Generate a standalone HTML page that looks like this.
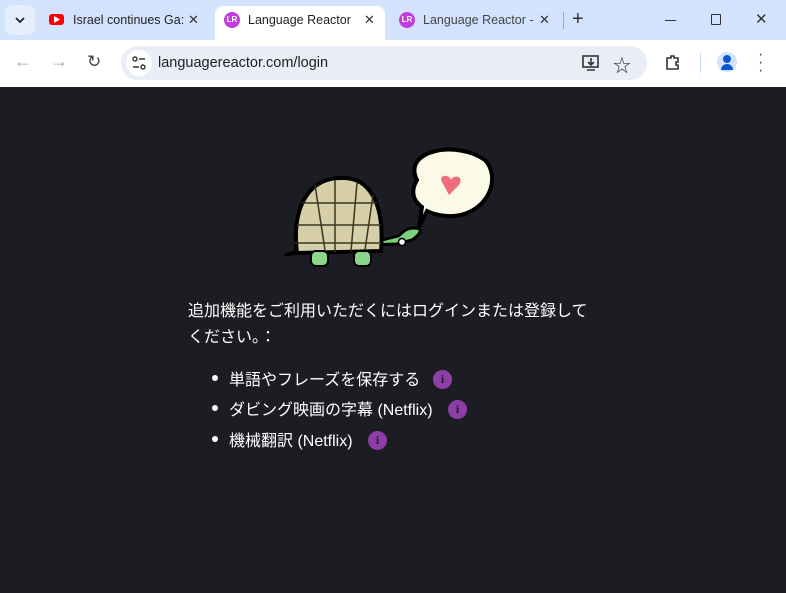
<!DOCTYPE html>
<html><head><meta charset="utf-8"><style>
*{margin:0;padding:0;box-sizing:border-box}
body{width:786px;height:593px;overflow:hidden;background:#1c1d22;font-family:"Liberation Sans","Noto Sans CJK JP",sans-serif;position:relative}
#top{position:absolute;left:0;top:0;width:786px;height:40px;background:#d3e3fd}
#bar{position:absolute;left:0;top:40px;width:786px;height:47px;background:#fff}
.t{position:absolute;font-size:12.5px;color:#1f1f1f;top:13px}
.tx{position:absolute;font-size:13px;color:#333;top:12px}
#addr{position:absolute;left:121px;top:46px;width:526px;height:34px;border-radius:17px;background:#e9eef6}
#page{position:absolute;left:1px;top:87px;width:784px;height:505px;background:#1c1d22;color:#fff}
.p{position:absolute;left:187px;font-size:16px;color:#fff;white-space:nowrap}
.li{position:absolute;left:228px;font-size:16px;color:#fff;white-space:nowrap}
.dot{position:absolute;left:211px;width:6px;height:6px;border-radius:3px;background:#fff}
.i{position:absolute;width:19px;height:19px;border-radius:50%;background:#8e3ea8;color:#1c1d22;font-size:12px;font-weight:bold;text-align:center;line-height:19px;font-family:"Liberation Serif",serif}
</style></head><body>
<div id="top">
 <div style="position:absolute;left:5px;top:5px;width:30px;height:30px;border-radius:8px;background:#e6eefc"></div>
 <svg style="position:absolute;left:14px;top:16px" width="12" height="8"><path d="M2 2l4 4 4-4" stroke="#1f1f1f" stroke-width="1.8" fill="none"/></svg>
 <div style="position:absolute;left:49px;top:14px;width:15px;height:11px;border-radius:3px;background:#f00"></div>
 <svg style="position:absolute;left:54px;top:16px" width="6" height="7"><path d="M0 0l6 3.5-6 3.5z" fill="#fff"/></svg>
 <div class="t" style="left:73px">Israel continues Ga:</div>
 <div class="tx" style="left:188px">✕</div>
 <div style="position:absolute;left:215px;top:6px;width:170px;height:34px;background:#fff;border-radius:8px 8px 0 0"></div>
 <div style="position:absolute;left:224px;top:12px;width:16px;height:16px;border-radius:50%;background:#c23ddb;color:#fff;font-size:8px;font-weight:bold;text-align:center;line-height:16px">LR</div>
 <div class="t" style="left:248px">Language Reactor</div>
 <div class="tx" style="left:364px">✕</div>
 <div style="position:absolute;left:399px;top:12px;width:16px;height:16px;border-radius:50%;background:#c23ddb;color:#fff;font-size:8px;font-weight:bold;text-align:center;line-height:16px">LR</div>
 <div class="t" style="left:423px;color:#444">Language Reactor -</div>
 <div class="tx" style="left:539px">✕</div>
 <div style="position:absolute;left:563px;top:12px;width:1px;height:17px;background:#9ab"></div>
 <div style="position:absolute;left:572px;top:8px;font-size:20px;color:#333">+</div>
 <div style="position:absolute;left:665px;top:20px;width:11px;height:1px;background:#333"></div>
 <div style="position:absolute;left:711px;top:14px;width:10px;height:11px;border:1.2px solid #333;border-radius:1px"></div>
 <div style="position:absolute;left:755px;top:10px;font-size:15px;color:#333">✕</div>
</div>
<div id="bar">
 <div style="position:absolute;left:14px;top:11px;font-size:18px;color:#aaa">←</div>
 <div style="position:absolute;left:50px;top:11px;font-size:18px;color:#aaa">→</div>
 <div style="position:absolute;left:87px;top:12px;font-size:17px;color:#444">↻</div>
 <div style="position:absolute;left:700px;top:13px;width:1px;height:20px;background:#cde"></div>
 <div style="position:absolute;left:717px;top:12px;width:20px;height:20px;border-radius:50%;background:#d3e3fd"></div>
 <div style="position:absolute;left:723px;top:15px;width:8px;height:8px;border-radius:50%;background:#0b57d0"></div>
 <div style="position:absolute;left:721px;top:24px;width:12px;height:6px;border-radius:6px 6px 0 0;background:#0b57d0"></div>
 <div style="position:absolute;left:758px;top:11px;font-size:16px;color:#444;line-height:8px">·<br>·<br>·</div>
 <svg style="position:absolute;left:664px;top:13px" width="18" height="18"><path d="M3 5h4v-2h3v2h4v4h-2v3h2v4H3z" fill="none" stroke="#333" stroke-width="1.6"/></svg>
</div>
<div id="addr">
 <div style="position:absolute;left:5px;top:4px;width:26px;height:26px;border-radius:50%;background:#fff"></div>
 <svg style="position:absolute;left:10px;top:9px" width="16" height="16"><circle cx="4" cy="4" r="2" fill="none" stroke="#333" stroke-width="1.4"/><path d="M8 4h6M2 12h6" stroke="#333" stroke-width="1.4"/><circle cx="12" cy="12" r="2" fill="none" stroke="#333" stroke-width="1.4"/></svg>
 <div style="position:absolute;left:37px;top:9px;font-size:14.5px;color:#1f1f1f">languagereactor.com/login</div>
 <svg style="position:absolute;left:460px;top:7px" width="20" height="20"><rect x="2" y="3" width="15" height="11" fill="none" stroke="#333" stroke-width="1.6"/><path d="M10 5v7M7 9l3 3 3-3M6 17h8" stroke="#333" stroke-width="1.6" fill="none"/></svg>
 <div style="position:absolute;left:492px;top:6px;font-size:18px;color:#333">☆</div>
</div>
<div id="page">
 <svg style="position:absolute;left:276px;top:58px" width="224" height="125">
  <path d="M140 35 C125 5 180 -5 208 15 C222 30 215 58 190 68 C175 74 158 70 150 66 L142 82 L145 62 C135 55 134 45 140 35Z" fill="#fbfae6" stroke="#000" stroke-width="4"/>
  <path d="M165 37 c-4-8 8-8 9-2 c2-6 14-4 8 5 l-10 10z" fill="#ec6e7a"/>
  <path d="M8 110 l22-8 l90-3 l15-4 c6-4 14-12 2-12 c-10 0-12 6-16 8 l-20 5z" fill="#7bd17b" stroke="#000" stroke-width="3"/>
  <circle cx="125" cy="97" r="3.5" fill="#fff" stroke="#000" stroke-width="1.5"/>
  <path d="M20 108 C14 58 35 32 65 33 C92 32 108 58 104 106Z" fill="#d6cfa8" stroke="#000" stroke-width="4"/>
  <g stroke="#3a3620" stroke-width="1.5" fill="none"><path d="M25 58h75M20 80h84M18 98h86M38 40l10 65M58 35v72M80 38l-6 68M96 50l-8 55"/></g>
  <rect x="34" y="106" width="17" height="15" rx="5" fill="#8bd68b" stroke="#000" stroke-width="2"/>
  <rect x="77" y="106" width="17" height="15" rx="5" fill="#8bd68b" stroke="#000" stroke-width="2"/>
 </svg>
 <div class="p" style="top:210px">追加機能をご利用いただくにはログインまたは登録して</div>
 <div class="p" style="top:236px">ください。：</div>
 <div class="dot" style="top:288px"></div><div class="li" style="top:279px">単語やフレーズを保存する</div><div class="i" style="left:432px;top:283px">i</div>
 <div class="dot" style="top:318px"></div><div class="li" style="top:309px">ダビング映画の字幕 (Netflix)</div><div class="i" style="left:447px;top:313px">i</div>
 <div class="dot" style="top:349px"></div><div class="li" style="top:340px">機械翻訳 (Netflix)</div><div class="i" style="left:367px;top:344px">i</div>
</div>
</body></html>
